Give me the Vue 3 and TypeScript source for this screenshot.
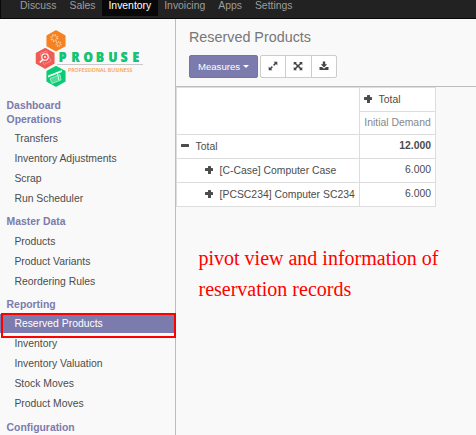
<script setup lang="ts">
interface MenuSection {
  title: string
  items: string[]
}

const apps: string[] = ['Discuss', 'Sales', 'Inventory', 'Invoicing', 'Apps', 'Settings']
const activeApp = 'Inventory'
const activeItem = 'Reserved Products'
const sections: MenuSection[] = [
  { title: 'Dashboard', items: [] },
  { title: 'Operations', items: ['Transfers', 'Inventory Adjustments', 'Scrap', 'Run Scheduler'] },
  { title: 'Master Data', items: ['Products', 'Product Variants', 'Reordering Rules'] },
  { title: 'Reporting', items: ['Reserved Products', 'Inventory', 'Inventory Valuation', 'Stock Moves', 'Product Moves'] },
  { title: 'Configuration', items: [] },
]
const rows = [
  { label: '[C-Case] Computer Case', value: '6.000' },
  { label: '[PCSC234] Computer SC234', value: '6.000' },
]
</script>

<template>
  <div class="page">
    <nav class="topbar">
      <a v-for="app in apps" :key="app" :class="{ active: app === activeApp }">{{ app }}</a>
    </nav>
    <div class="body">
      <aside class="sidebar">
        <svg class="logo" width="114" height="62" viewBox="0 0 114 62">
          <path d="M21 2 29.800 7V16.800L21 21.500 12.200 16.800V7Z" fill="#f58220" stroke="#f58220" stroke-width="1.500" stroke-linejoin="round" />
          <g fill="none" stroke="#fbcb9c">
            <circle cx="19.300" cy="9" r="3.300" stroke-width="1.400" stroke-dasharray="1.300 1.300" />
            <circle cx="19.300" cy="9" r="2.300" stroke-width=".6" />
            <circle cx="23.600" cy="15" r="2.500" stroke-width="1.200" stroke-dasharray="1.100 1.100" />
            <circle cx="23.600" cy="15" r="1.600" stroke-width=".6" />
          </g>
          <path d="M10.200 19.700 18.800 24.500V34.200L10.200 39 1.500 34.200V24.500Z" fill="#f15b55" stroke="#f15b55" stroke-width="1.500" stroke-linejoin="round" />
          <path d="M5 24.500 11.500 22 16 32 9 35.500Z" fill="none" stroke="#f69590" stroke-width=".8" />
          <circle cx="10" cy="28" r="3.200" fill="#f15b55" stroke="#fff" stroke-width="1.100" />
          <circle cx="10" cy="28" r=".9" fill="#fff" />
          <path d="m7.800 30.500-3 3" stroke="#fff" stroke-width="1.500" />
          <path d="M21 37.700 29.800 42.500V52.200L21 57 12.200 52.200V42.500Z" fill="#08cc74" stroke="#08cc74" stroke-width="1.500" stroke-linejoin="round" />
          <path d="m13 46.500 14-5.500v2L13 48.500Z" fill="#eafff4" />
          <path d="m15 49.500 10-4 1 5.500-9 3.500Z" fill="#55d99b" stroke="#d5fbe8" stroke-width=".6" />
          <path d="m22 43 2 8.500" stroke="#d5fbe8" stroke-width="1" />
          <path d="M22 35.500h86" stroke="#c9c9c9" />
          <g transform="scale(.8 1)">
            <text x="30.200 46 61 76.700 92.300 107.600 122.400" y="33.300" class="brand shade">PROBUSE</text>
            <text x="29.500 45.300 60.300 76 91.600 106.900 121.700" y="32.600" class="brand">PROBUSE</text>
          </g>
          <text x="33" y="43.300" textLength="64.500" lengthAdjust="spacingAndGlyphs" class="tagline">PROFESSIONAL BUSINESS</text>
        </svg>
        <div class="menu">
          <section v-for="s in sections" :key="s.title">
            <h4>{{ s.title }}</h4>
            <ul v-if="s.items.length">
              <li v-for="i in s.items" :key="i" :class="{ selected: i === activeItem }">
                <span>{{ i }}</span>
                <i v-if="i === activeItem" class="outline"></i>
              </li>
            </ul>
          </section>
        </div>
      </aside>
      <main class="content">
        <header class="panel">
          <h1>Reserved Products</h1>
          <div class="actions">
            <button class="primary">Measures<i class="caret"></i></button>
            <div class="group">
              <button>
                <svg width="10" height="10" viewBox="0 0 10 10"><path d="M5.600.700H9.300V4.400L8 3.100 6.200 4.900 5.100 3.800 6.900 2ZM.700 9.300V5.600L2 6.900 3.800 5.100 4.900 6.200 3.100 8 4.400 9.300Z" fill="#444" /></svg>
              </button>
              <button>
                <svg width="10" height="10" viewBox="0 0 10 10"><path d="M.700.900H4L2.900 2 5 4.100 7.100 2 6 .900H9.300V4.200L8.200 3.100 6.100 5.100 8.200 7.100 9.300 6V9.300H6L7.100 8.200 5 6.100 2.900 8.200 4 9.300H.700V6L1.800 7.100 3.900 5.100 1.800 3.100.700 4.200Z" fill="#444" /></svg>
              </button>
              <button>
                <svg width="10" height="10" viewBox="0 0 10 10"><path d="M3.800.500H6.200V3.200H8.200L5 6.400 1.800 3.200H3.800ZM.500 6H3L5 7.800 7 6H9.500V9H.500Z" fill="#444" /></svg>
              </button>
            </div>
          </div>
        </header>
        <table class="pivot">
          <tbody>
            <tr class="r1">
              <td rowspan="2"></td>
              <td class="col"><div class="cell"><i class="plus"></i>Total</div></td>
            </tr>
            <tr class="r2"><td class="measure">Initial Demand</td></tr>
            <tr>
              <td><div class="cell root"><i class="minus"></i>Total</div></td>
              <td class="num"><b>12.000</b></td>
            </tr>
            <tr v-for="r in rows" :key="r.label">
              <td><div class="cell child"><i class="plus"></i>{{ r.label }}</div></td>
              <td class="num">{{ r.value }}</td>
            </tr>
          </tbody>
        </table>
        <p class="note">pivot view and information of<br />reservation records</p>
      </main>
    </div>
  </div>
</template>

<style>
body { margin: 0; overflow: hidden; }
</style>

<style scoped>
* { box-sizing: border-box; }
.page { width: 476px; height: 435px; overflow: hidden; display: flex; flex-direction: column; background: #f9f9f9; color: #4c4c4c; font: 10.4px/14px "Liberation Sans", Arial, sans-serif; }
.topbar { height: 19px; flex: none; display: flex; padding-left: 12.600px; background: #222; border-bottom: 1px solid #080808; border-left: 1px solid #080808; }
.topbar a { height: 16px; padding: 0 6.500px; line-height: 11px; font-size: 10.400px; color: #9d9d9d; }
.topbar a.active { background: #080808; color: #fff; }
.body { flex: 1; display: flex; min-height: 0; }
.sidebar { width: 176px; flex: none; border-right: 1px solid #bdbdbd; }
.logo { display: block; margin: 10px 0 0 35px; }
.brand { font: 800 14.800px "Open Sans", sans-serif; fill: #08cc74; }
.shade { fill: #8d9b94; }
.tagline { font: 600 5.300px "Open Sans", sans-serif; fill: #f79a4d; }
.menu { padding-top: 7.900px; }
h4 { margin: 0; padding-left: 6.600px; height: 14px; line-height: 14px; font-size: 10.4px; color: #7c7bad; }
ul { list-style: none; margin: 0; padding: 2.400px 0 6.150px; }
section:nth-child(4) ul { padding-bottom: 6.700px; }
li { position: relative; height: 20px; padding: 0 0 1px; }
li span { display: block; height: 19px; line-height: 19px; padding-left: 14.400px; }
.selected span { background: #7c7bad; color: #fff; }
.outline { position: absolute; z-index: 1; left: 1px; top: -1px; width: 175px; height: 25px; border: 2px solid #f00; }
.content { flex: 1; min-width: 0; }
.panel { height: 68px; border-bottom: 1px solid #bdbdbd; padding: 9px 13px 0; }
h1 { margin: 0; font-size: 14.350px; font-weight: normal; line-height: 18px; color: #777; }
.actions { display: flex; gap: 2px; margin-top: 9px; }
button { height: 23px; margin: 0; padding: 0 0 1px; font: 9.6px "Liberation Sans", Arial, sans-serif; border: 1px solid #ccc; background: #fff; display: flex; align-items: center; justify-content: center; }
.primary { width: 69px; background: #7c7bad; border-color: #7473a6; color: #fff; border-radius: 2px; }
.caret { margin-left: 3px; border: 3.500px solid transparent; border-top-color: #fff; border-bottom: 0; }
.group { display: flex; }
.group button { width: 26.300px; margin-right: -1px; }
.group button:first-child { border-radius: 2px 0 0 2px; }
.group button:last-child { border-radius: 0 2px 2px 0; }
.pivot { border-collapse: collapse; table-layout: fixed; width: 259px; background: #fff; }
td { border: 1px solid #ddd; padding: 0; height: 24px; width: 76px; }
td:first-child:not(.measure) { width: 183px; }
.r2 td { height: 23px; }
.cell { display: flex; align-items: center; }
.cell i { position: relative; width: 8px; height: 8px; margin-right: 6.600px; }
.plus::before, .minus::before { content: ""; position: absolute; left: 0; top: 2.500px; width: 8px; height: 2.500px; border-radius: .5px; background: #4c4c4c; }
.plus::after { content: ""; position: absolute; left: 3px; top: 0; width: 2.500px; height: 8px; border-radius: .5px; background: #4c4c4c; }
.cell .plus, .cell .minus { top: -1px; }
.col .cell { padding-left: 4px; }
.root { padding-left: 4px; }
.child { padding-left: 28px; white-space: nowrap; }
.measure { color: #888; text-align: center; }
.num { text-align: right; padding: 0 4px 2px 0; }
.note { margin: 36px 0 0 22.500px; font: 20px/31px "Liberation Serif", serif; color: #f00; white-space: nowrap; }
</style>
